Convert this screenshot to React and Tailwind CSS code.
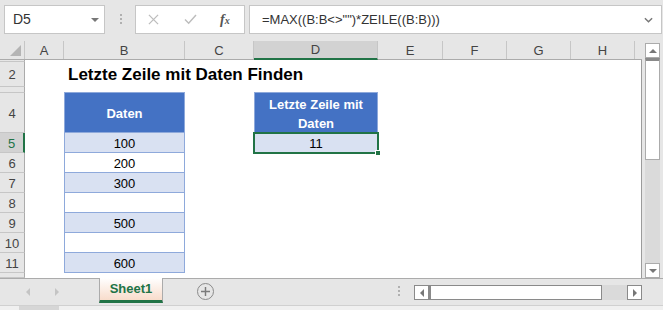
import React from 'react';

const COLS = [
  { k: 'A', w: 'w-[39px]' },
  { k: 'B', w: 'w-[121px]' },
  { k: 'C', w: 'w-[69px]' },
  { k: 'D', w: 'w-[124px]' },
  { k: 'E', w: 'w-[65px]' },
  { k: 'F', w: 'w-[64px]' },
  { k: 'G', w: 'w-[64px]' },
  { k: 'H', w: 'w-[64px]' },
];

const ROWS = [
  { n: 1, h: 'h-[2px]' },
  { n: 2, h: 'h-[25px]' },
  { n: 3, h: 'h-[6px]' },
  { n: 4, h: 'h-[40px]' },
  { n: 5, h: 'h-[20px]', v: '100', fill: true },
  { n: 6, h: 'h-[20px]', v: '200' },
  { n: 7, h: 'h-[20px]', v: '300', fill: true },
  { n: 8, h: 'h-[20px]', v: '' },
  { n: 9, h: 'h-[20px]', v: '500', fill: true },
  { n: 10, h: 'h-[20px]', v: '' },
  { n: 11, h: 'h-[20px]', v: '600', fill: true },
  { n: 12, h: 'h-[5px]' },
];

const font = "font-['Liberation_Sans',Arial,sans-serif]";

function Tri({ dir = 'down', className = '' }) {
  const pts = {
    down: '0,0 8,0 4,4',
    up: '0,4 8,4 4,0',
    left: '4,0 4,8 0,4',
    right: '0,0 0,8 4,4',
  }[dir];
  const vb = dir === 'down' || dir === 'up' ? '0 0 8 4' : '0 0 4 8';
  const size = dir === 'down' || dir === 'up' ? 'w-[8px] h-[4px]' : 'w-[4px] h-[8px]';
  return (
    <svg viewBox={vb} className={`${size} ${className}`}>
      <polygon points={pts} fill="currentColor" />
    </svg>
  );
}

function Dots({ className = '' }) {
  return (
    <div className={`flex flex-col gap-[2px] ${className}`}>
      <span className="w-[2px] h-[2px] bg-[#b0b0b0]" />
      <span className="w-[2px] h-[2px] bg-[#b0b0b0]" />
      <span className="w-[2px] h-[2px] bg-[#b0b0b0]" />
    </div>
  );
}

function Cell({ col, row }) {
  const w = col.w;
  const n = row.n;
  if (col.k === 'B') {
    if (n === 2) {
      return (
        <div className={`${w} relative`}>
          <span className="absolute left-[4px] top-[3px] whitespace-nowrap text-[17px] font-bold text-black leading-[20px]">
            Letzte Zeile mit Daten Finden
          </span>
        </div>
      );
    }
    if (n === 3) {
      return (
        <div className={`${w} flex items-end`}>
          <div className="w-full h-[1px] bg-[#8ea9db]" />
        </div>
      );
    }
    if (n === 4) {
      return (
        <div className={`${w} bg-[#4472c4] border-x border-b border-[#8ea9db] flex items-center justify-center pt-[2px] text-white font-bold text-[13px]`}>
          Daten
        </div>
      );
    }
    if (n >= 5 && n <= 11) {
      return (
        <div className={`${w} ${row.fill ? 'bg-[#d9e1f2]' : 'bg-white'} border-x border-b border-[#8ea9db] flex items-center justify-center pt-[2px] text-[13px] text-black`}>
          {row.v}
        </div>
      );
    }
  }
  if (col.k === 'D') {
    if (n === 3) {
      return (
        <div className={`${w} flex items-end`}>
          <div className="w-full h-[1px] bg-[#8ea9db]" />
        </div>
      );
    }
    if (n === 4) {
      return (
        <div className={`${w} bg-[#4472c4] border-x border-[#8ea9db] flex flex-col items-center justify-center text-white font-bold text-[13px] leading-[19px] pt-[2px]`}>
          <span>Letzte Zeile mit</span>
          <span>Daten</span>
        </div>
      );
    }
    if (n === 5) {
      return (
        <div className={`${w} relative bg-[#d9e1f2] flex items-center justify-center pt-[2px] text-[13px] text-black`}>
          11
          <div className="absolute -left-[1px] -top-[1px] -right-[1px] -bottom-[1px] border-2 border-[#217346]" />
          <div className="absolute -right-[3px] -bottom-[3px] w-[6px] h-[6px] bg-[#217346] border border-white" />
        </div>
      );
    }
  }
  return <div className={w} />;
}

export default function App() {
  return (
    <div className={`w-[663px] h-[310px] overflow-hidden bg-[#e6e6e6] ${font} select-none`}>
      {/* formula bar */}
      <div className="h-[41px] flex items-start pt-[5px]">
        <div className="ml-[4px] w-[101px] h-[29px] bg-white border border-[#c6c6c6] flex items-center pl-[8px] pr-[5px]">
          <span className="text-[14px] text-[#333]">D5</span>
          <Tri dir="down" className="ml-auto text-[#777]" />
        </div>
        <Dots className="ml-[15px] mt-[9px]" />
        <div className="ml-[13px] w-[110px] h-[29px] bg-white border border-[#c6c6c6] flex items-center pl-[12px]">
          <svg viewBox="0 0 12 12" className="w-[11px] h-[11px]">
            <path d="M1 1 L11 11 M11 1 L1 11" stroke="#bdbdbd" strokeWidth="1.4" />
          </svg>
          <svg viewBox="0 0 14 12" className="ml-[25px] w-[13px] h-[11px]">
            <path d="M1 6 L5 10 L13 1" stroke="#bdbdbd" strokeWidth="1.6" fill="none" />
          </svg>
          <span className="ml-[23px] font-['Liberation_Serif',serif] italic text-[14px] text-[#555] font-bold leading-none">
            f<span className="text-[10px]">x</span>
          </span>
        </div>
        <div className="ml-[4px] flex-1 h-[29px] bg-white border border-[#c6c6c6] flex items-center pl-[12px] pr-[8px] mr-[1px]">
          <span className="text-[13px] text-[#333] whitespace-nowrap">=MAX((B:B&lt;&gt;"")*ZEILE((B:B)))</span>
          <svg viewBox="0 0 10 6" className="ml-auto w-[9px] h-[6px]">
            <path d="M1 1 L5 5 L9 1" stroke="#777" strokeWidth="1.6" fill="none" />
          </svg>
        </div>
      </div>

      {/* sheet area */}
      <div className="h-[237px] flex">
        <div className="w-[642px] flex flex-col">
          {/* column headers */}
          <div className="h-[19px] flex border-b border-[#ababab] text-[13px] text-[#444]">
            <div className="w-[25px] relative border-r border-[#c6c6c6]">
              <svg viewBox="0 0 10 10" className="absolute right-[3px] bottom-[3px] w-[11px] h-[11px]">
                <polygon points="10,0 10,10 0,10" fill="#b4b4b4" />
              </svg>
            </div>
            {COLS.map((c) => (
              <div
                key={c.k}
                className={`${c.w} flex items-center justify-center pt-[1px] border-r border-[#c6c6c6] ${c.k === 'D' ? 'bg-[#d2d2d2] border-b-2 border-b-[#217346] -mb-[1px]' : ''}`}
              >
                {c.k}
              </div>
            ))}
          </div>
          {/* rows */}
          <div className="flex-1 flex flex-col bg-white border-r border-[#9b9b9b] overflow-hidden">
            {ROWS.map((r) => (
              <div key={r.n} className={`${r.h} flex shrink-0`}>
                <div
                  className={`w-[25px] shrink-0 overflow-hidden flex justify-center text-[13px] leading-[20px] border-b border-[#c6c6c6] ${
                    r.n === 5
                      ? 'bg-[#d2d2d2] text-[#217346] border-r-2 border-r-[#217346]'
                      : 'bg-[#e6e6e6] text-[#444] border-r border-r-[#ababab]'
                  } ${r.n === 1 ? 'items-end' : r.n === 3 || r.n === 12 ? 'items-start' : 'items-center pt-[2px]'}`}
                >
                  {r.n}
                </div>
                {COLS.map((c) => (
                  <Cell key={c.k} col={c} row={r} />
                ))}
              </div>
            ))}
          </div>
        </div>
        {/* vertical scrollbar */}
        <div className="ml-[3px] w-[15px] flex flex-col pt-[2px]">
          <div className="h-[15px] bg-white border border-[#ababab] flex items-center justify-center">
            <Tri dir="up" className="text-[#777]" />
          </div>
          <div className="h-[102px] bg-white border border-[#ababab] border-t-[3px] border-t-[#8a8a8a]" />
          <div className="flex-1 bg-[#dadada]" />
          <div className="h-[15px] bg-white border border-[#ababab] flex items-center justify-center">
            <Tri dir="down" className="text-[#777]" />
          </div>
        </div>
      </div>

      {/* sheet tabs */}
      <div className="h-[27px] flex items-start border-t border-[#ababab]">
        <Tri dir="left" className="ml-[26px] mt-[9px] text-[#c4c4c4]" />
        <Tri dir="right" className="ml-[25px] mt-[9px] text-[#c4c4c4]" />
        <div className="ml-[40px] -mt-[1px] w-[64px] h-[25px] bg-gradient-to-b from-white to-[#f8dccb] border-x border-[#ababab] border-b-[3px] border-b-[#217346] flex items-center justify-center text-[13px] font-bold text-[#217346]">
          Sheet1
        </div>
        <div className="ml-[34px] mt-[4px] w-[17px] h-[17px] rounded-full border-[1.5px] border-[#8a8a8a] flex items-center justify-center">
          <svg viewBox="0 0 10 10" className="w-[9px] h-[9px]">
            <path d="M5 0 V10 M0 5 H10" stroke="#7a7a7a" strokeWidth="1.6" />
          </svg>
        </div>
        <Dots className="ml-[184px] mt-[7px]" />
        <div className="ml-[14px] mt-[6px] flex h-[15px]">
          <div className="w-[15px] bg-white border border-[#8a8a8a] flex items-center justify-center">
            <Tri dir="left" className="text-[#777]" />
          </div>
          <div className="w-[173px] bg-white border border-[#8a8a8a] border-l-[2px]" />
          <div className="w-[25px] bg-[#dadada]" />
          <div className="w-[15px] bg-white border border-[#8a8a8a] flex items-center justify-center">
            <Tri dir="right" className="text-[#777]" />
          </div>
        </div>
      </div>
      <div className="h-[5px] border-t border-[#d0d0d0] bg-[#f0f0f0] flex">
        <div className="ml-[19px] w-[40px] bg-[#d6d6d6]" />
      </div>
    </div>
  );
}
